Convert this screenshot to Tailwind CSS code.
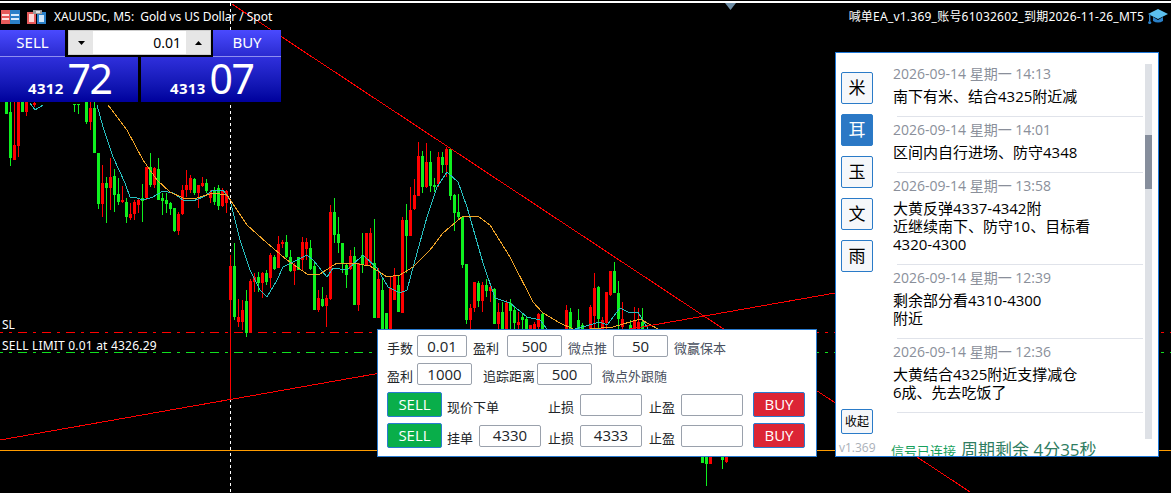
<!DOCTYPE html>
<html lang="en">
  <head>
    <meta charset="UTF-8" />
    <title>XAUUSDc M5</title>
    <script src="https://cdn.jsdelivr.net/npm/@tailwindcss/browser@4"></script>
  </head>
  <body class="bg-black">
    <div class="relative w-[1171px] h-[493px] overflow-hidden bg-black font-['Noto_Sans','Noto_Sans_CJK_SC',sans-serif]">
      <!-- chart canvas -->
      <svg id="chart" class="absolute inset-0" width="1171" height="493" shape-rendering="crispEdges">
        <g id="candles"></g>
        <polyline fill="none" stroke="#28c0c0" points="30,103 35,110 43,105" />
        <polyline fill="none" stroke="#28c0c0" points="97,105 103,127 113,157 125,183 130,197 137,198 143,200 153,197 163,191 173,193 183,200 193,201 203,197 213,190 223,190 230,200 240,240 250,270 260,290 267,297 277,280 283,267 293,262 307,255 313,260 327,277 333,268 347,270 363,255 377,268 388,287 400,293 407,290 417,253 427,217 437,187 447,172 458,182 467,207 483,263 495,298 510,303 527,317 540,320 547,329" />
        <polyline fill="none" stroke="#28c0c0" points="575,329 600,322 607,325 620,308 630,313 638,312 648,329" />
        <polyline fill="none" stroke="#f0a428" points="108,105 127,130 143,160 157,180 170,192 183,198 197,198 213,193 227,195 247,225 267,243 287,260 307,274 320,274 337,263 353,263 370,266 387,277 400,275 413,267 430,250 443,233 463,216 478,216 490,225 510,257 533,302 543,313 560,323 573,329" />
        <polyline fill="none" stroke="#f0a428" points="590,329 613,327 640,319 658,329" />
        <line x1="230.5" y1="3" x2="230.5" y2="493" stroke="#fff" stroke-dasharray="3 3" />
        <rect x="230" y="255" width="1" height="145" fill="#ff0000" />
        <line x1="232" y1="4" x2="970" y2="492" stroke="#ff0000" />
        <line x1="0" y1="440" x2="835" y2="293" stroke="#ff0000" />
        <line x1="0" y1="332.5" x2="1171" y2="332.5" stroke="#ff0000" stroke-dasharray="9 6 3 6" stroke-dashoffset="6" />
        <line x1="0" y1="352.5" x2="1171" y2="352.5" stroke="#10e020" stroke-dasharray="9 6 3 6" stroke-dashoffset="6" />
        <rect x="0" y="450" width="1171" height="1" fill="#ff9c00" />
        <rect x="0" y="1" width="1171" height="2" fill="#fff" />
        <polygon points="725,3 736,3 730.5,10" fill="#6f8ea6" shape-rendering="auto" />
      </svg>

      <!-- chart title -->
      <div class="absolute left-0 top-[8px] h-[18px] flex items-center text-white text-[12px]">
        <svg class="ml-[1px]" width="19" height="14" viewBox="0 0 19 14" shape-rendering="crispEdges">
          <rect x="0" y="0" width="19" height="14" fill="#fff" />
          <rect x="0" y="0" width="9" height="14" fill="#e65a5a" />
          <rect x="9" y="0" width="10" height="14" fill="#2a80c8" />
          <rect x="1" y="4" width="7" height="2" fill="#ffe0e0" />
          <rect x="1" y="8" width="7" height="2" fill="#ffe0e0" />
          <rect x="10" y="4" width="8" height="2" fill="#d8ecfc" />
          <rect x="10" y="8" width="8" height="2" fill="#d8ecfc" />
        </svg>
        <svg class="ml-[7px]" width="19" height="14" viewBox="0 0 19 14" shape-rendering="crispEdges">
          <rect x="0" y="2" width="9" height="12" fill="#e65a5a" />
          <rect x="2" y="4" width="5" height="8" fill="#ffd8d8" />
          <rect x="10" y="2" width="9" height="12" fill="#2a80c8" />
          <rect x="12" y="5" width="5" height="7" fill="#cfe6fa" />
          <rect x="6" y="0" width="9" height="4" fill="#9a9a9a" />
          <rect x="9" y="1" width="4" height="2" fill="#e0e0e0" />
        </svg>
        <span class="ml-[8px] whitespace-pre tracking-[-0.05px]">XAUUSDc, M5:  Gold vs US Dollar / Spot</span>
      </div>

      <!-- one click trading -->
      <div class="absolute left-0 top-[30px] w-[281px] text-white">
        <div class="flex h-[27px]">
          <div class="w-[65px] bg-gradient-to-b from-[#4a4aff] to-[#2a2ad0] pb-[2px] flex items-center justify-center text-[15px] border-b border-[#8f8ff0]">SELL</div>
          <div class="ml-[3px] w-[143px] h-[25px] bg-[#e6e6e6] border border-[#cfcfcf] flex text-black">
            <div class="w-[24px] flex items-center justify-center">
              <svg width="7" height="4"><polygon points="0,0 7,0 3.5,4" fill="#000" /></svg>
            </div>
            <div class="flex-1 bg-white flex items-center justify-end pr-[5px] text-[14px]">0.01</div>
            <div class="w-[24px] flex items-center justify-center">
              <svg width="7" height="4"><polygon points="0,4 7,4 3.5,0" fill="#000" /></svg>
            </div>
          </div>
          <div class="ml-[2px] w-[68px] bg-gradient-to-b from-[#4a4aff] to-[#2a2ad0] pb-[2px] flex items-center justify-center text-[15px] border-b border-[#8f8ff0]">BUY</div>
        </div>
        <div class="flex gap-[3px] h-[45px]">
          <div class="w-[138px] bg-gradient-to-b from-[#2f2fdc] to-[#00009c] flex items-start pl-[28px]">
            <span class="mt-[21px] text-[15px] tracking-[0.3px] font-bold leading-[20px]">4312</span>
            <span class="ml-[4px] mt-[-2px] text-[41px] leading-[46px] tracking-[-1.5px]">72</span>
          </div>
          <div class="w-[140px] bg-gradient-to-b from-[#2f2fdc] to-[#00009c] flex items-start pl-[29px]">
            <span class="mt-[21px] text-[15px] tracking-[0.3px] font-bold leading-[20px]">4313</span>
            <span class="ml-[4px] mt-[-2px] text-[41px] leading-[46px] tracking-[-1.5px]">07</span>
          </div>
        </div>
      </div>

      <!-- right title -->
      <div class="absolute right-[3px] top-[8px] h-[18px] flex items-center text-white text-[12px]">
        <span class="tracking-[0.23px]">喊单EA_v1.369_账号61032602_到期2026-11-26_MT5</span>
        <svg class="ml-[4px]" width="20" height="16" viewBox="0 0 20 16">
          <polygon points="10,0 20,5 10,10 0,5" fill="#5cc0ee" />
          <path d="M5 8 L5 12 Q10 15 15 12 L15 8 L10 11 Z" fill="#2a80c8" />
          <rect x="1" y="5" width="1.4" height="7" fill="#2a80c8" />
          <circle cx="1.7" cy="13.5" r="1.6" fill="#2a80c8" />
        </svg>
      </div>

      <!-- text labels on chart -->
      <div class="absolute left-[2px] top-[317px] text-white text-[12px] leading-[16px]">SL</div>
      <div class="absolute left-[2px] top-[338px] text-white text-[12px] leading-[16px] tracking-[0.2px]">SELL LIMIT 0.01 at 4326.29</div>

      <!-- order panel -->
      <div class="absolute left-[377px] top-[329px] w-[440px] h-[128px] bg-white border border-[#2a7bd0] pl-[9px] pt-[5px] text-[13px] text-[#212529] font-['Open_Sans','Noto_Sans_CJK_SC',sans-serif]">
        <div class="flex items-center h-[22px]">
          <span class="w-[30px] pt-[6px]">手数</span>
          <div class="w-[50px] h-[22px] border border-[#9aa1ac] rounded-[2px] flex items-center justify-center text-[15px]">0.01</div>
          <span class="ml-[6px] w-[34px] pt-[6px]">盈利</span>
          <div class="w-[55px] h-[22px] border border-[#9aa1ac] rounded-[2px] flex items-center justify-center text-[15px]">500</div>
          <span class="ml-[6px] w-[45px] pt-[6px] text-[#4a5160]">微点推</span>
          <div class="w-[55px] h-[22px] border border-[#9aa1ac] rounded-[2px] flex items-center justify-center text-[15px]">50</div>
          <span class="ml-[6px] pt-[6px] text-[#4a5160]">微赢保本</span>
        </div>
        <div class="flex items-center h-[22px] mt-[6px]">
          <span class="w-[30px] pt-[6px]">盈利</span>
          <div class="w-[55px] h-[22px] border border-[#9aa1ac] rounded-[2px] flex items-center justify-center text-[15px]">1000</div>
          <span class="ml-[11px] w-[54px] pt-[6px]">追踪距离</span>
          <div class="w-[55px] h-[22px] border border-[#9aa1ac] rounded-[2px] flex items-center justify-center text-[15px]">500</div>
          <span class="ml-[10px] pt-[6px] text-[#4a5160]">微点外跟随</span>
        </div>
        <div class="flex items-center h-[25px] mt-[7px]">
          <div class="w-[55px] h-[25px] bg-[#09ae4a] border border-[#2a7bd0] rounded-[2px] flex items-center justify-center text-white text-[15px]">SELL</div>
          <span class="ml-[5px] w-[101px] pt-[6px]">现价下单</span>
          <span class="w-[32px] pt-[6px]">止损</span>
          <div class="w-[62px] h-[22px] border border-[#9aa1ac] rounded-[2px]"></div>
          <span class="ml-[7px] w-[32px] pt-[6px]">止盈</span>
          <div class="w-[62px] h-[22px] border border-[#9aa1ac] rounded-[2px]"></div>
          <div class="ml-[10px] w-[52px] h-[25px] bg-[#dc2535] border border-[#2a7bd0] rounded-[2px] flex items-center justify-center text-white text-[15px]">BUY</div>
        </div>
        <div class="flex items-center h-[25px] mt-[6px]">
          <div class="w-[55px] h-[25px] bg-[#09ae4a] border border-[#2a7bd0] rounded-[2px] flex items-center justify-center text-white text-[15px]">SELL</div>
          <span class="ml-[5px] w-[32px] pt-[6px]">挂单</span>
          <div class="w-[62px] h-[22px] border border-[#9aa1ac] rounded-[2px] flex items-center justify-center text-[15px]">4330</div>
          <span class="ml-[7px] w-[32px] pt-[6px]">止损</span>
          <div class="w-[62px] h-[22px] border border-[#9aa1ac] rounded-[2px] flex items-center justify-center text-[15px]">4333</div>
          <span class="ml-[7px] w-[32px] pt-[6px]">止盈</span>
          <div class="w-[62px] h-[22px] border border-[#9aa1ac] rounded-[2px]"></div>
          <div class="ml-[10px] w-[52px] h-[25px] bg-[#dc2535] border border-[#2a7bd0] rounded-[2px] flex items-center justify-center text-white text-[15px]">BUY</div>
        </div>
      </div>

      <!-- signal panel -->
      <div class="absolute left-[835px] top-[52px] w-[324px] h-[405px] bg-white border border-[#1e78d8] overflow-hidden flex font-['Open_Sans','Noto_Sans_CJK_SC',sans-serif]">
        <!-- teacher tabs -->
        <div class="w-[57px] shrink-0 pl-[5px] pt-[19px] flex flex-col">
          <div class="flex flex-col gap-[10px]">
            <div class="w-[32px] h-[32px] bg-[#f5f7fa] border border-[#2a7bc8] rounded-[2px] flex items-center justify-center text-[17px] text-black">米</div>
            <div class="w-[32px] h-[32px] bg-[#2b78c5] border border-[#2a7bc8] rounded-[2px] flex items-center justify-center text-[17px] text-white">耳</div>
            <div class="w-[32px] h-[32px] bg-[#f5f7fa] border border-[#2a7bc8] rounded-[2px] flex items-center justify-center text-[17px] text-black">玉</div>
            <div class="w-[32px] h-[32px] bg-[#f5f7fa] border border-[#2a7bc8] rounded-[2px] flex items-center justify-center text-[17px] text-black">文</div>
            <div class="w-[32px] h-[32px] bg-[#f5f7fa] border border-[#2a7bc8] rounded-[2px] flex items-center justify-center text-[17px] text-black">雨</div>
          </div>
          <div class="mt-[137px] w-[32px] h-[32px] bg-[#f5f7fa] border border-[#2a7bc8] rounded-[2px] flex items-center justify-center text-[12px] text-black">收起</div>
          <div class="mt-[6px] ml-[-2px] text-[12px] leading-[16px] text-[#aab0b8]">v1.369</div>
        </div>
        <!-- messages -->
        <div class="w-[252px] shrink-0 pt-[8px] h-[387px] overflow-hidden">
          <div class="pt-[3px] pb-[11px]">
            <div class="text-[14px] leading-[20px] text-[#8a8f9a]">2026-09-14 星期一 14:13</div>
            <div class="mt-[3px] text-[15px] leading-[18px] text-black">南下有米、结合4325附近减</div>
          </div>
          <div class="ml-[4px] w-[246px] h-px bg-[#e0e3ea]"></div>
          <div class="pt-[3px] pb-[11px]">
            <div class="text-[14px] leading-[20px] text-[#8a8f9a]">2026-09-14 星期一 14:01</div>
            <div class="mt-[3px] text-[15px] leading-[18px] text-black">区间内自行进场、防守4348</div>
          </div>
          <div class="ml-[4px] w-[246px] h-px bg-[#e0e3ea]"></div>
          <div class="pt-[3px] pb-[11px]">
            <div class="text-[14px] leading-[20px] text-[#8a8f9a]">2026-09-14 星期一 13:58</div>
            <div class="mt-[3px] text-[15px] leading-[18px] text-black">大黄反弹4337-4342附<br />近继续南下、防守10、目标看<br />4320-4300</div>
          </div>
          <div class="ml-[4px] w-[246px] h-px bg-[#e0e3ea]"></div>
          <div class="pt-[3px] pb-[11px]">
            <div class="text-[14px] leading-[20px] text-[#8a8f9a]">2026-09-14 星期一 12:39</div>
            <div class="mt-[3px] text-[15px] leading-[18px] text-black">剩余部分看4310-4300<br />附近</div>
          </div>
          <div class="ml-[4px] w-[246px] h-px bg-[#e0e3ea]"></div>
          <div class="pt-[3px] pb-[11px]">
            <div class="text-[14px] leading-[20px] text-[#8a8f9a]">2026-09-14 星期一 12:36</div>
            <div class="mt-[3px] text-[15px] leading-[18px] text-black">大黄结合4325附近支撑减仓<br />6成、先去吃饭了</div>
          </div>
          <div class="ml-[4px] w-[246px] h-px bg-[#e0e3ea]"></div>
        </div>
        <!-- scrollbar -->
        <div class="mt-[11px] w-[7px] h-[375px] bg-[#dee1e6] pt-[71px]">
          <div class="h-[54px] bg-[#868e9c]"></div>
        </div>
        <!-- status line -->
        <div class="absolute left-[55px] top-[384px] flex items-baseline whitespace-nowrap">
          <span class="text-[13px] text-[#16a05c]">信号已连接</span>
          <span class="ml-[5px] text-[17px] text-[#2f7d62]">周期剩余 4分35秒</span>
        </div>
      </div>
    </div>
    <script>
      // x, high, low, body top, body bottom, colour
      const bars = [
        [6,95,114,100,114,"g"],[10,95,166,112,158,"g"],[14,95,160,145,160,"r"],[18,95,157,100,146,"r"],[22,95,112,100,112,"g"],[26,95,116,100,112,"r"],
        [34,102,107,103,105,"r"],[74,104,112,104,104,"g"],[78,104,114,104,104,"g"],[86,100,124,100,122,"g"],[90,100,130,108,122,"r"],[94,100,153,108,153,"g"],
        [98,153,209,153,204,"g"],[102,165,217,183,204,"r"],[106,177,223,183,188,"g"],[110,158,210,177,188,"r"],[114,169,212,176,195,"g"],[118,178,205,194,202,"g"],
        [122,186,203,200,202,"r"],[126,198,223,202,217,"g"],[130,203,220,214,218,"r"],[134,200,220,202,214,"r"],[138,198,213,200,205,"r"],[142,184,222,198,201,"g"],
        [146,167,200,167,198,"r"],[150,153,187,167,185,"g"],[154,167,188,168,185,"r"],[158,158,200,169,200,"g"],[162,193,215,198,201,"g"],[166,193,213,200,204,"g"],
        [170,202,215,203,209,"g"],[174,208,232,208,231,"g"],[178,212,235,214,231,"r"],[182,185,215,190,214,"r"],[186,170,197,185,190,"r"],[190,175,193,178,190,"r"],
        [194,178,195,179,193,"g"],[198,185,208,185,193,"r"],[202,177,187,183,186,"r"],[206,179,193,183,191,"g"],[210,190,203,192,198,"r"],[214,187,205,190,202,"g"],
        [218,185,210,188,206,"g"],[222,188,207,191,206,"r"],[226,190,213,191,203,"r"],[230,255,400,266,300,"r"],[234,243,320,266,317,"g"],[238,299,327,317,322,"r"],
        [242,300,330,310,322,"r"],[246,290,337,301,333,"g"],[250,279,333,281,333,"r"],[254,273,292,277,282,"r"],[258,272,292,277,283,"g"],[262,272,298,273,283,"r"],
        [266,270,285,273,282,"g"],[270,253,288,255,278,"r"],[274,255,270,257,269,"g"],[278,236,268,244,268,"r"],[282,240,248,242,244,"r"],[286,235,258,242,257,"g"],
        [290,250,272,257,271,"g"],[294,263,285,265,271,"r"],[298,257,270,257,270,"g"],[302,237,270,242,260,"r"],[306,238,260,242,249,"r"],[310,240,270,248,269,"g"],
        [314,263,310,266,310,"g"],[318,290,312,298,310,"r"],[322,287,307,299,306,"g"],[326,295,327,298,306,"r"],[330,205,300,212,299,"r"],[334,198,243,212,235,"g"],
        [338,217,253,234,243,"g"],[342,243,273,243,263,"g"],[346,263,288,265,275,"g"],[350,250,270,256,269,"r"],[354,247,305,256,305,"g"],[358,263,311,263,305,"r"],
        [362,233,273,255,265,"g"],[366,233,265,233,265,"r"],[370,228,266,233,263,"r"],[374,219,318,263,318,"g"],[378,268,318,279,318,"r"],[382,277,330,290,330,"g"],
        [386,313,330,313,330,"g"],[390,277,330,288,330,"r"],[394,268,300,275,300,"r"],[398,275,312,285,312,"g"],
        [402,217,313,220,313,"r"],[406,204,273,220,236,"g"],[410,187,236,210,236,"r"],[414,179,210,195,209,"r"],[418,142,196,156,196,"r"],[422,151,193,156,187,"g"],
        [426,143,188,162,187,"r"],[430,151,192,162,186,"g"],[434,178,192,185,187,"g"],[438,152,187,157,184,"r"],[442,152,173,157,165,"g"],[446,147,177,149,165,"r"],
        [450,148,200,149,196,"g"],[454,194,231,195,213,"g"],[458,194,220,212,217,"g"],[462,216,268,217,265,"g"],[466,264,324,264,320,"g"],[470,304,329,308,320,"r"],
        [474,282,312,282,308,"r"],[478,281,307,283,301,"g"],[482,282,312,285,301,"r"],[486,279,297,285,291,"g"],[490,285,302,287,291,"r"],[494,288,324,289,324,"g"],
        [498,303,335,312,324,"r"],[502,302,335,312,335,"g"],[506,300,335,303,335,"r"],[510,299,335,303,311,"g"],[514,307,335,310,323,"g"],[518,312,335,322,325,"r"],
        [522,313,335,317,320,"g"],[526,317,335,319,329,"g"],[530,325,335,325,335,"r"],[534,322,335,324,335,"r"],[538,313,335,314,327,"r"],[542,312,335,314,335,"g"],
        [566,305,335,310,335,"r"],[570,308,335,312,335,"g"],[578,309,335,320,329,"g"],[582,323,335,325,335,"g"],[590,305,335,307,335,"r"],[594,273,335,288,316,"r"],
        [598,286,335,287,319,"g"],[602,317,335,320,335,"r"],[606,292,335,292,323,"r"],[610,271,296,271,295,"r"],[614,262,293,271,293,"g"],[618,281,335,293,319,"g"],
        [622,302,335,319,327,"r"],[630,320,335,325,335,"g"],[634,307,335,320,335,"r"],[638,308,335,322,335,"r"],[642,308,335,322,335,"g"],
        [702,457,463,457,463,"g"],[706,457,486,457,464,"g"],[710,457,464,457,464,"r"],[722,457,469,457,460,"g"],[726,457,463,457,462,"r"],
      ];
      const colours = { r: "#ff0000", g: "#0ff01f" };
      const group = document.getElementById("candles");
      const addRect = (x, y, w, h, fill) => {
        const r = document.createElementNS("http://www.w3.org/2000/svg", "rect");
        r.setAttribute("x", x);
        r.setAttribute("y", y);
        r.setAttribute("width", w);
        r.setAttribute("height", h);
        r.setAttribute("fill", fill);
        group.appendChild(r);
      };
      bars.forEach(([x, hi, lo, top, bot, c]) => {
        addRect(x, hi, 1, lo - hi, colours[c]);
        addRect(x - 1, top, 3, Math.max(bot - top, 1), colours[c]);
      });
    </script>
  </body>
</html>
